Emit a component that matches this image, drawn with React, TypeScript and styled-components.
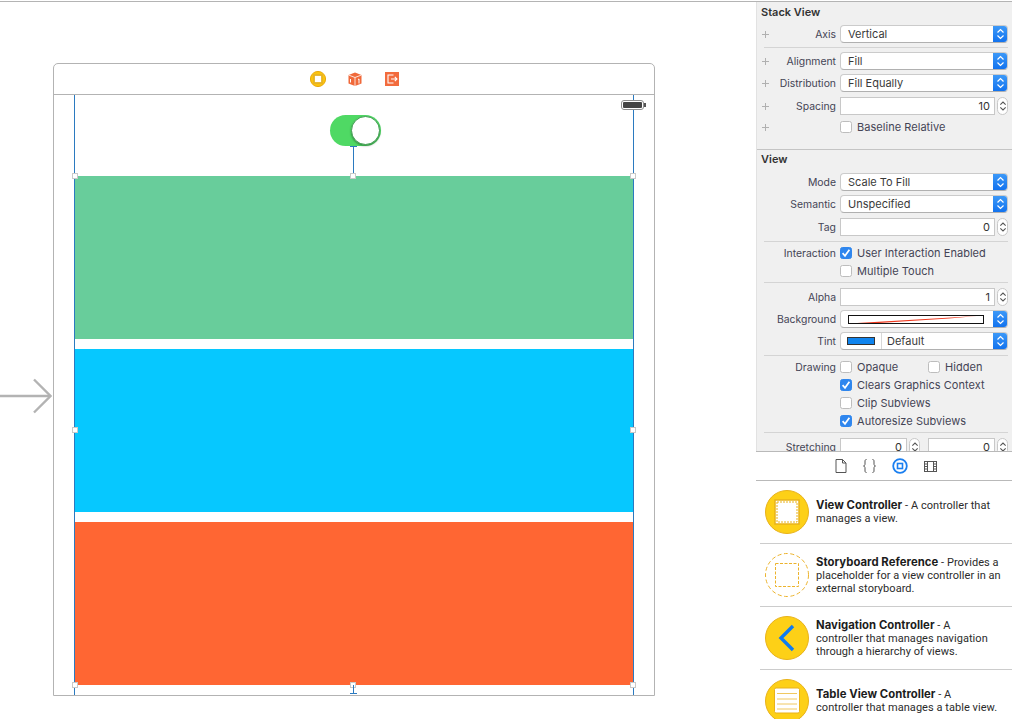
import React from 'react';
import styled, { createGlobalStyle } from 'styled-components';

const GlobalStyle = createGlobalStyle`
    html, body {
        margin: 0;
        padding: 0;
        background: #ffffff;
    }
    body {
        font-family: Inter, "Liberation Sans", sans-serif;
        font-size: 11px;
        color: #3a3a3a;
    }
    * {
        box-sizing: border-box;
    }
`;

const Chevrons = ({ color }: { color: string }) => (
    <svg width="9" height="12" viewBox="0 0 9 12" fill="none" stroke={color} strokeWidth="1.2">
        <path d="M1.5 4.5 L4.5 1.5 L7.5 4.5" />
        <path d="M1.5 7.5 L4.5 10.5 L7.5 7.5" />
    </svg>
);

const Check = () => (
    <svg width="10" height="10" viewBox="0 0 10 10" fill="none" stroke="#fff" strokeWidth="1.7">
        <path d="M1.6 5.2 L4 7.8 L8.4 1.8" />
    </svg>
);

function Field({ label, plus, mt, children }: { label?: string; plus?: boolean; mt: number; children: React.ReactNode }) {
    return (
        <Row $mt={mt}>
            <LabelCell>
                {plus ? <Plus /> : <span />}
                {label && <span>{label}</span>}
            </LabelCell>
            <Controls>{children}</Controls>
        </Row>
    );
}

function Select({ value }: { value: string }) {
    return (
        <SelectBox>
            <SelectValue>{value}</SelectValue>
            <SelectArrow>
                <Chevrons color="#fff" />
            </SelectArrow>
        </SelectBox>
    );
}

function Stepper({ value, half }: { value: string; half?: boolean }) {
    return (
        <StepperWrap $half={half}>
            <StepInput>{value}</StepInput>
            <StepButtons>
                <Chevrons color="#555" />
            </StepButtons>
        </StepperWrap>
    );
}

function CheckItem({ label, checked }: { label: string; checked?: boolean }) {
    return (
        <CheckWrap>
            <CheckBox $checked={checked}>{checked && <Check />}</CheckBox>
            {label}
        </CheckWrap>
    );
}

const ControllerIcon = () => (
    <svg width="44" height="44" viewBox="0 0 44 44">
        <circle cx="22" cy="22" r="21.5" fill="#fdd017" stroke="#e8b21a" />
        <rect x="10" y="10" width="24" height="24" fill="#fff" stroke="#e8b21a" strokeWidth="1.5" />
        <rect x="12" y="12" width="20" height="20" fill="none" stroke="#e8b21a" strokeWidth="1" strokeDasharray="2 1" />
    </svg>
);

const ReferenceIcon = () => (
    <svg width="44" height="44" viewBox="0 0 44 44" fill="none" stroke="#ecb32c">
        <circle cx="22" cy="22" r="21.5" strokeDasharray="4 2.5" />
        <rect x="10.5" y="10.5" width="23" height="23" strokeDasharray="3 1.5" />
    </svg>
);

const NavigationIcon = () => (
    <svg width="44" height="44" viewBox="0 0 44 44">
        <circle cx="22" cy="22" r="21.5" fill="#fdd017" stroke="#e8b21a" />
        <path d="M28 10 L16 22 L28 34" fill="none" stroke="#0f7bf0" strokeWidth="3.4" />
    </svg>
);

const TableIcon = () => (
    <svg width="44" height="44" viewBox="0 0 44 44">
        <circle cx="22" cy="22" r="21.5" fill="#fdd017" stroke="#e8b21a" />
        <rect x="9.5" y="9" width="25" height="25" rx="1.5" fill="#fff" stroke="#e8b21a" />
        <path d="M12 14.5 H32 M12 20 H32 M12 25 H32 M12 30 H32" stroke="#f0c860" strokeWidth="1" />
    </svg>
);

const library = [
    { icon: <ControllerIcon />, name: 'View Controller', lines: ['- A controller that', 'manages a view.'] },
    { icon: <ReferenceIcon />, name: 'Storyboard Reference', lines: ['- Provides a', 'placeholder for a view controller in an', 'external storyboard.'] },
    { icon: <NavigationIcon />, name: 'Navigation Controller', lines: ['- A', 'controller that manages navigation', 'through a hierarchy of views.'] },
    { icon: <TableIcon />, name: 'Table View Controller', lines: ['- A', 'controller that manages a table view.'] },
];

export default function App() {
    return (
        <Page>
            <GlobalStyle />
            <Canvas>
                <EntryArrow width="52" height="36" viewBox="0 0 52 36" fill="none" stroke="#b3b3b3" strokeWidth="2.4">
                    <path d="M0 18 H50" />
                    <path d="M34 1.5 L50.5 18 L34 34.5" />
                </EntryArrow>
                <Scene>
                    <SceneBar>
                        <svg width="16" height="16" viewBox="0 0 16 16">
                            <circle cx="8" cy="8" r="7.6" fill="#fcc40e" stroke="#e8a90f" />
                            <rect x="4" y="4" width="8" height="8" fill="#fff" stroke="#e6b325" strokeWidth="1.8" />
                        </svg>
                        <svg width="16" height="16" viewBox="0 0 16 16">
                            <path d="M1.5 4 L8 1.5 L14.5 4 V12.5 L8 15 L1.5 12.5 Z" fill="#f0693a" />
                            <path d="M1.5 4 L8 6.5 L14.5 4 M8 6.5 V15" fill="none" stroke="#fff" strokeWidth=".8" />
                            <path d="M3.5 8 V11.5 M11 8.5 L12 8 V12.5" fill="none" stroke="#fff" strokeWidth="1" />
                        </svg>
                        <svg width="16" height="16" viewBox="0 0 16 16">
                            <rect x="1" y="1" width="14" height="14" fill="#f26b3d" />
                            <path d="M9.5 4 H4 V12 H9.5 M7 8 H13 M10.8 5.8 L13 8 L10.8 10.2" fill="none" stroke="#fff" strokeWidth="1.1" />
                        </svg>
                    </SceneBar>
                    <SceneBody>
                        <Guide $x={20} />
                        <Guide $x={579} />
                        <Battery>
                            <BatteryFill />
                        </Battery>
                        <ToggleArea>
                            <Toggle>
                                <Knob />
                            </Toggle>
                            <Connector />
                        </ToggleArea>
                        <StackView>
                            <Panel $color="#68cd9b" />
                            <Panel $color="#06c8ff" />
                            <Panel $color="#ff6633" />
                            <Handle $x="0%" $y="0%" />
                            <Handle $x="calc(50% - 1px)" $y="0%" />
                            <Handle $x="100%" $y="0%" />
                            <Handle $x="0%" $y="calc(50% - 1px)" />
                            <Handle $x="100%" $y="calc(50% - 1px)" />
                            <Handle $x="0%" $y="100%" />
                            <Handle $x="calc(50% - 1px)" $y="100%" />
                            <Handle $x="100%" $y="100%" />
                            <BottomPin />
                        </StackView>
                    </SceneBody>
                </Scene>
            </Canvas>

            <Sidebar>
                <Inspector>
                    <Section>
                        <Title $h={19}>Stack View</Title>
                        <Field label="Axis" plus mt={4}><Select value="Vertical" /></Field>
                        <Divider $mt={4} />
                        <Field label="Alignment" plus mt={4}><Select value="Fill" /></Field>
                        <Field label="Distribution" plus mt={4}><Select value="Fill Equally" /></Field>
                        <Field label="Spacing" plus mt={5}><Stepper value="10" /></Field>
                        <Field plus mt={3}><CheckItem label="Baseline Relative" /></Field>
                    </Section>
                    <SectionRule />
                    <Title $h={17}>View</Title>
                    <Field label="Mode" mt={6}><Select value="Scale To Fill" /></Field>
                    <Field label="Semantic" mt={4}><Select value="Unspecified" /></Field>
                    <Field label="Tag" mt={5}><Stepper value="0" /></Field>
                    <Divider $mt={5} />
                    <Field label="Interaction" mt={2}><CheckItem label="User Interaction Enabled" checked /></Field>
                    <Field mt={0}><CheckItem label="Multiple Touch" /></Field>
                    <Divider $mt={2} />
                    <Field label="Alpha" mt={5}><Stepper value="1" /></Field>
                    <Field label="Background" mt={4}>
                        <SelectBox>
                            <Swatch>
                                <svg width="100%" height="100%" viewBox="0 0 134 7" preserveAspectRatio="none">
                                    <path d="M8 7 L128 0 L100 2.4 L30 7 Z" fill="#f03a20" />
                                </svg>
                            </Swatch>
                            <SelectArrow>
                                <Chevrons color="#fff" />
                            </SelectArrow>
                        </SelectBox>
                    </Field>
                    <Field label="Tint" mt={4}>
                        <SelectBox>
                            <TintCell>
                                <TintChip />
                            </TintCell>
                            <SelectValue $pad={5}>Default</SelectValue>
                            <SelectArrow>
                                <Chevrons color="#fff" />
                            </SelectArrow>
                        </SelectBox>
                    </Field>
                    <Divider $mt={5} />
                    <Field label="Drawing" mt={2}>
                        <CheckItem label="Opaque" />
                        <HiddenSlot><CheckItem label="Hidden" /></HiddenSlot>
                    </Field>
                    <Field mt={0}><CheckItem label="Clears Graphics Context" checked /></Field>
                    <Field mt={0}><CheckItem label="Clip Subviews" /></Field>
                    <Field mt={0}><CheckItem label="Autoresize Subviews" checked /></Field>
                    <Divider $mt={2} />
                    <Field label="Stretching" mt={5}>
                        <Stepper value="0" half />
                        <Stepper value="0" half />
                    </Field>
                </Inspector>

                <TabBar>
                    <svg width="12" height="14" viewBox="0 0 12 14" fill="none" stroke="#555" strokeWidth="1">
                        <path d="M1 .5 H7.5 L11 4 V13.5 H1 Z M7.5 .5 V4 H11" />
                    </svg>
                    <svg width="13" height="14" viewBox="0 0 13 14" fill="none" stroke="#555" strokeWidth="1">
                        <path d="M3.5 .5 C2 .5 2 1.5 2 3 V5 C2 6 1.5 7 .5 7 C1.5 7 2 8 2 9 V11 C2 12.5 2 13.5 3.5 13.5" />
                        <path d="M9.5 .5 C11 .5 11 1.5 11 3 V5 C11 6 11.5 7 12.5 7 C11.5 7 11 8 11 9 V11 C11 12.5 11 13.5 9.5 13.5" />
                    </svg>
                    <svg width="16" height="16" viewBox="0 0 16 16" fill="none" stroke="#1a7ff0">
                        <circle cx="8" cy="8" r="6.8" strokeWidth="1.8" />
                        <rect x="5.5" y="5.5" width="5" height="5" strokeWidth="1.6" />
                    </svg>
                    <svg width="13" height="11" viewBox="0 0 13 11" fill="none" stroke="#555" strokeWidth="1">
                        <rect x=".5" y=".5" width="12" height="10" />
                        <path d="M3.5 .5 V10.5 M9.5 .5 V10.5 M1 3 H3 M1 5.5 H3 M1 8 H3 M10 3 H12 M10 5.5 H12 M10 8 H12" />
                    </svg>
                </TabBar>

                <Library>
                    {library.map((item) => (
                        <LibraryItem key={item.name}>
                            {item.icon}
                            <LibraryText>
                                <strong>{item.name}</strong> {item.lines[0]}
                                {item.lines.slice(1).map((line) => (
                                    <div key={line}>{line}</div>
                                ))}
                            </LibraryText>
                        </LibraryItem>
                    ))}
                </Library>
            </Sidebar>
        </Page>
    );
}

const Page = styled.div`
    display: flex;
    width: 1012px;
    height: 719px;
    margin-top: 1px;
    border-top: 1px solid #b4b4b4;
    overflow: hidden;
`;

const Canvas = styled.main`
    position: relative;
    width: 756px;
    flex: none;
    padding: 61px 0 0 53px;
    background: #ffffff;
`;

const EntryArrow = styled.svg`
    position: absolute;
    left: 0;
    top: 376px;
`;

const Scene = styled.section`
    width: 602px;
    height: 633px;
    border: 1px solid #b3b3b3;
    border-radius: 5px 5px 0 0;
`;

const SceneBar = styled.div`
    height: 31px;
    padding-left: 1px;
    display: flex;
    align-items: center;
    justify-content: center;
    gap: 21px;
    border-bottom: 1px solid #b3b3b3;
`;

const SceneBody = styled.div`
    position: relative;
    height: 600px;
    padding: 0 21px;
    display: flex;
    flex-direction: column;
`;

const Guide = styled.div<{ $x: number }>`
    position: absolute;
    top: 0;
    bottom: 0;
    left: ${(p) => p.$x}px;
    width: 1px;
    background: #2b7ac0;
`;

const Battery = styled.div`
    position: absolute;
    top: 5px;
    right: 10px;
    width: 23px;
    height: 10px;
    padding: 1px;
    border: 1px solid #8d8d8d;
    border-radius: 3px;
    background: #ffffff;

    &::after {
        content: '';
        position: absolute;
        right: -3px;
        top: 2px;
        width: 2px;
        height: 4px;
        background: #555;
    }
`;

const BatteryFill = styled.div`
    height: 100%;
    border-radius: 1px;
    background: #444444;
`;

const ToggleArea = styled.div`
    height: 81px;
    padding-top: 20px;
    display: flex;
    flex-direction: column;
    align-items: center;
`;

const Toggle = styled.div`
    width: 51px;
    height: 31px;
    border-radius: 16px;
    background: #4fd964;
    position: relative;
    flex: none;
    transform: translateX(1px);
`;

const Knob = styled.div`
    position: absolute;
    right: 1px;
    top: 1px;
    width: 29px;
    height: 29px;
    border-radius: 50%;
    background: #ffffff;
    border: 1px solid #3f9e50;
    box-shadow: 0 1px 2px rgba(0, 0, 0, 0.35);
`;

const Connector = styled.div`
    width: 1px;
    flex: 1;
    background: #2b7ac0;
    position: relative;
    transform: translateX(-1px);

    &::before {
        content: '';
        position: absolute;
        left: -3px;
        top: 0;
        width: 7px;
        height: 1px;
        background: #2b7ac0;
    }
`;

const StackView = styled.div`
    position: relative;
    display: grid;
    grid-template-rows: repeat(3, 163px);
    row-gap: 10px;
`;

const Panel = styled.div<{ $color: string }>`
    background: ${(p) => p.$color};
`;

const Handle = styled.div<{ $x: string; $y: string }>`
    position: absolute;
    left: ${(p) => p.$x};
    top: ${(p) => p.$y};
    width: 6px;
    height: 6px;
    margin: -3px 0 0 -3px;
    background: #ffffff;
    border: 1px solid #c9c9c9;
`;

const BottomPin = styled.div`
    position: absolute;
    left: calc(50% - 1px);
    top: 100%;
    width: 1px;
    height: 9px;
    background: #2b7ac0;

    &::after {
        content: '';
        position: absolute;
        left: -3px;
        bottom: 0;
        width: 7px;
        height: 1px;
        background: #2b7ac0;
    }
`;

const Sidebar = styled.aside`
    width: 256px;
    flex: none;
    display: flex;
    flex-direction: column;
    background: #ffffff;
`;

const Inspector = styled.div`
    height: 449px;
    flex: none;
    overflow: hidden;
    background: #f0f0f0;
    border-left: 1px solid #e2e2e2;
`;

const Section = styled.div`
    height: 148px;
`;

const SectionRule = styled.div`
    height: 1px;
    margin-top: -1px;
    background: #c4c4c4;
`;

const Title = styled.div<{ $h: number }>`
    height: ${(p) => p.$h}px;
    padding-left: 4px;
    display: flex;
    align-items: center;
    font-weight: 600;
    color: #333;
`;

const Divider = styled.div<{ $mt: number }>`
    height: 1px;
    margin: ${(p) => p.$mt}px 4px 0 7px;
    background: #d4d4d4;
`;

const Row = styled.div<{ $mt: number }>`
    height: 18px;
    margin-top: ${(p) => p.$mt}px;
    display: grid;
    grid-template-columns: 79px 168px;
    column-gap: 4px;
    align-items: center;
`;

const LabelCell = styled.div`
    display: flex;
    justify-content: space-between;
    align-items: center;
    padding-left: 5px;
    font-size: 10.4px;
    color: #444455;
    white-space: nowrap;
`;

const Plus = styled.span`
    position: relative;
    width: 7px;
    height: 7px;

    &::before,
    &::after {
        content: '';
        position: absolute;
        background: #b0b0b0;
    }
    &::before {
        left: 0;
        right: 0;
        top: 3px;
        height: 1px;
    }
    &::after {
        top: 0;
        bottom: 0;
        left: 3px;
        width: 1px;
    }
`;

const Controls = styled.div`
    display: flex;
    align-items: center;
    justify-content: space-between;
`;

const SelectBox = styled.div`
    width: 168px;
    height: 18px;
    display: flex;
    align-items: center;
    background: #ffffff;
    border: 1px solid #cbcbcb;
    border-bottom-color: #b0b0b0;
    border-radius: 4px;
    overflow: hidden;
`;

const SelectValue = styled.div<{ $pad?: number }>`
    flex: 1;
    padding-left: ${(p) => p.$pad ?? 7}px;
    color: #3a3a3a;
`;

const SelectArrow = styled.div`
    width: 15px;
    align-self: stretch;
    flex: none;
    margin: -1px -1px -1px 0;
    display: flex;
    align-items: center;
    justify-content: center;
    background: linear-gradient(#3f9bf8, #0f70ee);
`;

const Swatch = styled.div`
    flex: 1;
    height: 9px;
    margin: 0 9px 0 7px;
    background: #ffffff;
    border: 1px solid #111111;

    svg {
        display: block;
    }
`;

const TintCell = styled.div`
    width: 41px;
    align-self: stretch;
    flex: none;
    display: flex;
    align-items: center;
    justify-content: center;
    border-right: 1px solid #d8d8d8;
`;

const TintChip = styled.div`
    width: 28px;
    height: 8px;
    background: #0f84ee;
    border: 1px solid #333;
`;

const StepperWrap = styled.div<{ $half?: boolean }>`
    width: ${(p) => (p.$half ? '80px' : '168px')};
    display: flex;
    align-items: center;
    justify-content: space-between;
`;

const StepInput = styled.div`
    flex: 1;
    height: 18px;
    margin-right: 2px;
    padding-right: 4px;
    display: flex;
    align-items: center;
    justify-content: flex-end;
    background: #ffffff;
    border: 1px solid #c8c8c8;
    color: #333;
`;

const StepButtons = styled.div`
    width: 11px;
    height: 18px;
    flex: none;
    display: flex;
    align-items: center;
    justify-content: center;
    background: #ffffff;
    border: 1px solid #c8c8c8;
    border-radius: 6px;

    svg {
        width: 8px;
    }
`;

const CheckWrap = styled.label`
    display: flex;
    align-items: center;
    gap: 5px;
    letter-spacing: 0.04px;
    color: #444455;
    white-space: nowrap;
`;

const CheckBox = styled.span<{ $checked?: boolean }>`
    width: 12px;
    height: 12px;
    border-radius: 2.5px;
    display: flex;
    align-items: center;
    justify-content: center;
    background: ${(p) => (p.$checked ? '#2f86ee' : '#ffffff')};
    border: 1px solid ${(p) => (p.$checked ? '#2f86ee' : '#bdbdbd')};
`;

const HiddenSlot = styled.div`
    width: 80px;
`;

const TabBar = styled.nav`
    height: 30px;
    flex: none;
    padding-left: 3px;
    display: flex;
    align-items: center;
    justify-content: center;
    gap: 16px;
    background: #ffffff;
    border-top: 1px solid #b9b9b9;
    border-bottom: 1px solid #b9b9b9;
`;

const Library = styled.div`
    flex: 1;
    padding-left: 4px;
    overflow: hidden;
`;

const LibraryItem = styled.div`
    height: 63px;
    display: flex;
    align-items: center;
    gap: 7px;
    padding-left: 5px;
    border-bottom: 1px solid #cccccc;

    svg {
        flex: none;
    }
`;

const LibraryText = styled.div`
    font-family: Roboto, "Liberation Sans", sans-serif;
    line-height: 13px;
    letter-spacing: 0.05px;
    color: #2b2b2b;
    white-space: nowrap;

    strong {
        font-family: Inter, "Liberation Sans", sans-serif;
        font-size: 11.3px;
        font-weight: 700;
        color: #1c1c1c;
    }
`;
